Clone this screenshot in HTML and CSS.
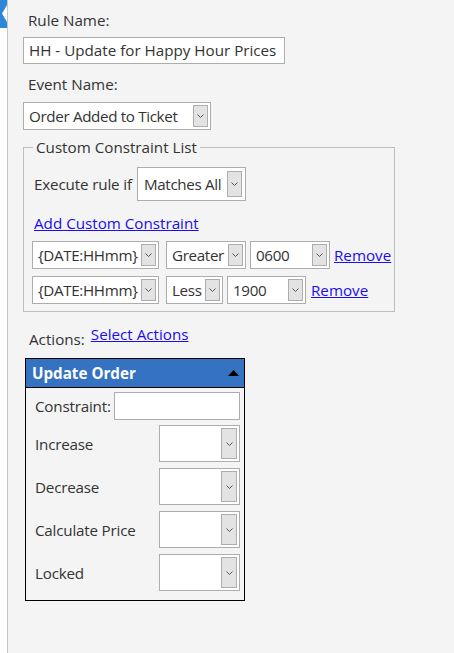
FILE: index.html
```html
<!DOCTYPE html>
<html>
<head>
<meta charset="utf-8">
<link rel="stylesheet" href="styles.css">
</head>
<body>
<div class="page">
  <div class="rail">
    <svg class="chev" width="7" height="28" viewBox="0 0 7 28"><polygon points="0,0 7,0 7,5 2,13.5 7,22 7,28 0,28" fill="#2b88d8"/></svg>
  </div>
  <div class="main">
    <div class="label first">Rule Name:</div>
    <div class="textbox name">HH - Update for Happy Hour Prices</div>
    <div class="label">Event Name:</div>
    <div class="select event"><span class="val">Order Added to Ticket</span><span class="btn"><svg width="7" height="4" viewBox="0 0 7 4"><polyline points="0.5,0.5 3.5,3.5 6.5,0.5" fill="none" stroke="#555" stroke-width="1"/></svg></span></div>

    <fieldset class="constraints">
      <legend>Custom Constraint List</legend>
      <div class="exec">
        <span class="exlabel">Execute rule if</span>
        <div class="select matches"><span class="val">Matches All</span><span class="btn"><svg width="7" height="4" viewBox="0 0 7 4"><polyline points="0.5,0.5 3.5,3.5 6.5,0.5" fill="none" stroke="#555"/></svg></span></div>
      </div>
      <a class="link add" href="#">Add Custom Constraint</a>
      <div class="crow">
        <div class="select s-date"><span class="val">{DATE:HHmm}</span><span class="btn"><svg width="7" height="4" viewBox="0 0 7 4"><polyline points="0.5,0.5 3.5,3.5 6.5,0.5" fill="none" stroke="#555"/></svg></span></div>
        <div class="select s-greater"><span class="val">Greater</span><span class="btn"><svg width="7" height="4" viewBox="0 0 7 4"><polyline points="0.5,0.5 3.5,3.5 6.5,0.5" fill="none" stroke="#555"/></svg></span></div>
        <div class="select s-num"><span class="val">0600</span><span class="btn"><svg width="7" height="4" viewBox="0 0 7 4"><polyline points="0.5,0.5 3.5,3.5 6.5,0.5" fill="none" stroke="#555"/></svg></span></div>
        <a class="link" href="#">Remove</a>
      </div>
      <div class="crow">
        <div class="select s-date"><span class="val">{DATE:HHmm}</span><span class="btn"><svg width="7" height="4" viewBox="0 0 7 4"><polyline points="0.5,0.5 3.5,3.5 6.5,0.5" fill="none" stroke="#555"/></svg></span></div>
        <div class="select s-less"><span class="val">Less</span><span class="btn"><svg width="7" height="4" viewBox="0 0 7 4"><polyline points="0.5,0.5 3.5,3.5 6.5,0.5" fill="none" stroke="#555"/></svg></span></div>
        <div class="select s-num2"><span class="val">1900</span><span class="btn"><svg width="7" height="4" viewBox="0 0 7 4"><polyline points="0.5,0.5 3.5,3.5 6.5,0.5" fill="none" stroke="#555"/></svg></span></div>
        <a class="link rm2" href="#">Remove</a>
      </div>
    </fieldset>

    <div class="actions">
      <span>Actions:</span>
      <a class="link" href="#">Select Actions</a>
    </div>

    <div class="panel">
      <div class="phead"><span>Update Order</span><svg width="11" height="6" viewBox="0 0 11 6"><polygon points="0,6 5.5,0 11,6" fill="#000"/></svg></div>
      <div class="pbody">
        <div class="prow constraint"><span>Constraint:</span><div class="textbox cinput"></div></div>
        <div class="prow"><span>Increase</span><div class="select psel"><span class="val"></span><span class="btn"><svg width="7" height="4" viewBox="0 0 7 4"><polyline points="0.5,0.5 3.5,3.5 6.5,0.5" fill="none" stroke="#555"/></svg></span></div></div>
        <div class="prow"><span>Decrease</span><div class="select psel"><span class="val"></span><span class="btn"><svg width="7" height="4" viewBox="0 0 7 4"><polyline points="0.5,0.5 3.5,3.5 6.5,0.5" fill="none" stroke="#555"/></svg></span></div></div>
        <div class="prow"><span>Calculate Price</span><div class="select psel"><span class="val"></span><span class="btn"><svg width="7" height="4" viewBox="0 0 7 4"><polyline points="0.5,0.5 3.5,3.5 6.5,0.5" fill="none" stroke="#555"/></svg></span></div></div>
        <div class="prow"><span>Locked</span><div class="select psel"><span class="val"></span><span class="btn"><svg width="7" height="4" viewBox="0 0 7 4"><polyline points="0.5,0.5 3.5,3.5 6.5,0.5" fill="none" stroke="#555"/></svg></span></div></div>
      </div>
    </div>
  </div>
</div>
</body>
</html>
```

FILE: styles.css
```css
* { box-sizing: border-box; }
html, body { margin: 0; padding: 0; height: 100%; }
body {
  background: #ffffff;
  font-family: "Open Sans", "Noto Sans", sans-serif;
  font-size: 15.2px;
  color: #333333;
}
.page { display: flex; height: 653px; }
.rail { width: 7px; flex: none; background: #ffffff; }
.chev { display: block; }
.main {
  flex: 1;
  background: #f4f4f4;
  border-left: 1px solid #c6c6c6;
  padding: 8px 0 0 15px;
}
.label { height: 20px; line-height: 20px; margin: 0 0 0 5px; }
.label.first { margin-top: 2px; margin-bottom: 7px; }
.textbox {
  background: #fff;
  border: 1px solid #adadad;
  height: 27px;
  line-height: 25px;
  padding: 0 5px;
  white-space: nowrap;
}
.name { width: 262px; margin-bottom: 10px; }
.select {
  display: flex;
  align-items: stretch;
  background: #fff;
  border: 1px solid #adadad;
  height: 28px;
  padding: 2px;
}
.select .val { flex: 1; padding-left: 3px; line-height: 22px; white-space: nowrap; overflow: hidden; letter-spacing: -0.35px; }
.select .btn {
  width: 15px;
  flex: none;
  background: #e3e3e3;
  border: 1px solid #adadad;
  display: flex;
  align-items: center;
  justify-content: center;
}
.event { width: 188px; margin-top: 8px; }

.constraints {
  margin: 7px 0 0 0;
  width: 372px;
  border: 1px solid #bdbdbd;
  padding: 0 0 7px 8px;
  min-width: 0;
}
.constraints legend { padding: 0 3px; margin-left: 1px; line-height: 20px; }
.exec { display: flex; align-items: center; gap: 5px; margin: 10px 0 0 2px; }
.exlabel { letter-spacing: -0.15px; }
.matches { width: 109px; height: 34px; padding: 3px; }
.matches .val { line-height: 26px; }
.add { display: block; margin: 12px 0 0 2px; line-height: 20px; }
.link { color: #1a0dee; text-decoration: underline; }
.crow { display: flex; align-items: center; gap: 4px; margin-top: 8px; }
.crow + .crow { margin-top: 7px; }
.crow .link { margin-left: 0; }
.crow .rm2 { margin-left: 1px; }
.s-date { width: 127px; margin-right: 3px; }
.s-greater { width: 80px; }
.s-less { width: 57px; }
.s-num { width: 80px; }
.s-num2 { width: 79px; }

.actions { display: flex; align-items: flex-start; gap: 6px; margin: 12px 0 0 6px; height: 34px; }
.actions span { margin-top: 5px; }
.actions .link { margin-top: 0px; }

.panel {
  margin-left: 2px;
  width: 220px;
  border: 1px solid #000;
  background: #f4f4f4;
}
.phead {
  background: #3572c2;
  color: #fff;
  font-weight: bold;
  height: 29px;
  display: flex;
  align-items: center;
  justify-content: space-between;
  padding: 0 5px 0 6px;
  border-bottom: 1px solid #000;
}
.pbody { padding: 4px 4px 6px 9px; }
.prow { display: flex; align-items: center; justify-content: space-between; height: 43px; }
.prow span { letter-spacing: -0.2px; }
.prow.constraint { height: 28px; margin-bottom: 2px; }
.cinput { width: 126px; height: 28px; }
.psel { width: 81px; height: 37px; }
.psel .btn { width: 16px; }
```
